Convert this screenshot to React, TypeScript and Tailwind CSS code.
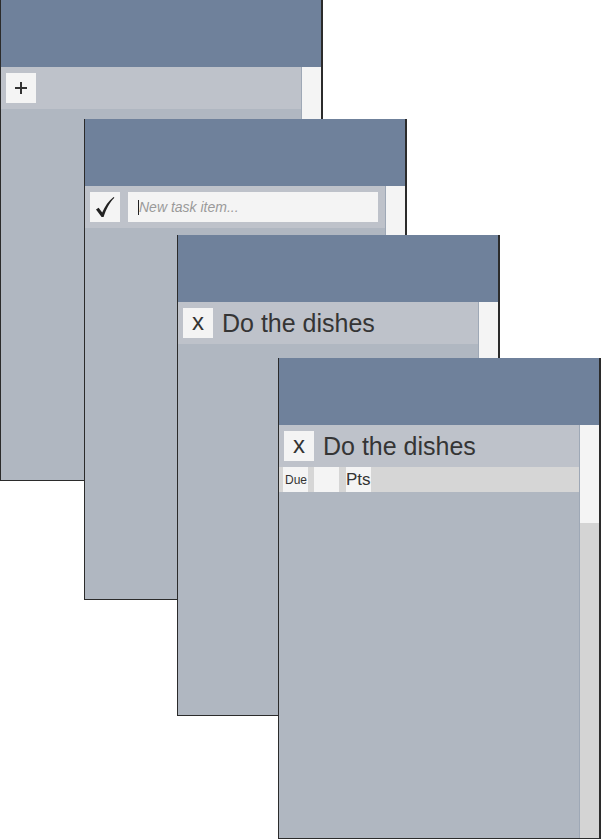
import React from "react";

type PanelProps = {
  left: string;
  top: string;
  children?: React.ReactNode;
};

function Panel({ left, top, children }: PanelProps) {
  return (
    <div
      className={`absolute ${left} ${top} w-[323px] h-[481px] flex flex-col border-l border-b border-r-2 border-[#2b2b2b] bg-[#b0b7c1]`}
    >
      {/* title bar */}
      <div className="h-[67px] shrink-0 bg-[#6f819b]" />
      <div className="flex flex-1 min-h-0">
        <div className="flex-1 flex flex-col">{children}</div>
        {/* scrollbar */}
        <div className="w-[20px] flex flex-col border-l border-[#9ea8b6] bg-[#d4d4d4]">
          <div className="h-[98px] bg-[#f4f4f4]" />
        </div>
      </div>
    </div>
  );
}

function SquareButton({ children }: { children: React.ReactNode }) {
  return (
    <div className="w-[30px] h-[30px] shrink-0 bg-[#f4f4f4] flex items-center justify-center text-[#333]">
      {children}
    </div>
  );
}

function TaskRow() {
  return (
    <div className="h-[42px] flex items-center pl-[5px] gap-[9px] bg-[#bec2ca]">
      <SquareButton>
        <span className="text-[24px] leading-none -mt-[3px]">x</span>
      </SquareButton>
      <span className="text-[25px] leading-none text-[#353535]">Do the dishes</span>
    </div>
  );
}

export default function App() {
  return (
    <div className="relative w-[601px] h-[839px] bg-white overflow-hidden font-['Liberation_Sans',Arial,sans-serif]">
      {/* empty list: add button */}
      <Panel left="left-0" top="top-0">
        <div className="h-[42px] flex items-center pl-[5px] bg-[#bec2ca]">
          <SquareButton>
            <svg width="14" height="14" viewBox="0 0 14 14">
              <path d="M7 1v12M1 7h12" stroke="#333" strokeWidth="2" />
            </svg>
          </SquareButton>
        </div>
      </Panel>

      {/* new task input */}
      <Panel left="left-[84px]" top="top-[119px]">
        <div className="h-[42px] flex items-center pl-[5px] gap-[8px] bg-[#bec2ca]">
          <SquareButton>
            <svg width="20" height="22" viewBox="0 0 20 22">
              <path
                d="M1 13.5 L3.6 11.8 L7.2 16.6 C10 10 13.5 5 18.6 1 L19.4 1.8 C14.6 6.6 11.4 12.6 8.6 21 L6.6 21 Z"
                fill="#222"
              />
            </svg>
          </SquareButton>
          <div className="w-[250px] h-[30px] bg-[#f4f4f4] flex items-center pl-[10px]">
            <span className="w-px h-[15px] bg-[#222]" />
            <span className="text-[14px] italic text-[#9a9a9a]">New task item...</span>
          </div>
        </div>
      </Panel>

      {/* one task */}
      <Panel left="left-[177px]" top="top-[235px]">
        <TaskRow />
      </Panel>

      {/* task with details */}
      <Panel left="left-[278px]" top="top-[358px]">
        <TaskRow />
        <div className="h-[25px] flex items-stretch pl-[4px] bg-[#d6d6d6] text-[#333]">
          <div className="w-[25px] bg-[#f4f4f4] flex items-center pl-[2px] text-[12px]">Due</div>
          <div className="w-[25px] ml-[6px] bg-[#f4f4f4]" />
          <div className="w-[25px] ml-[7px] bg-[#f4f4f4] flex items-center text-[17px]">Pts</div>
        </div>
      </Panel>
    </div>
  );
}
